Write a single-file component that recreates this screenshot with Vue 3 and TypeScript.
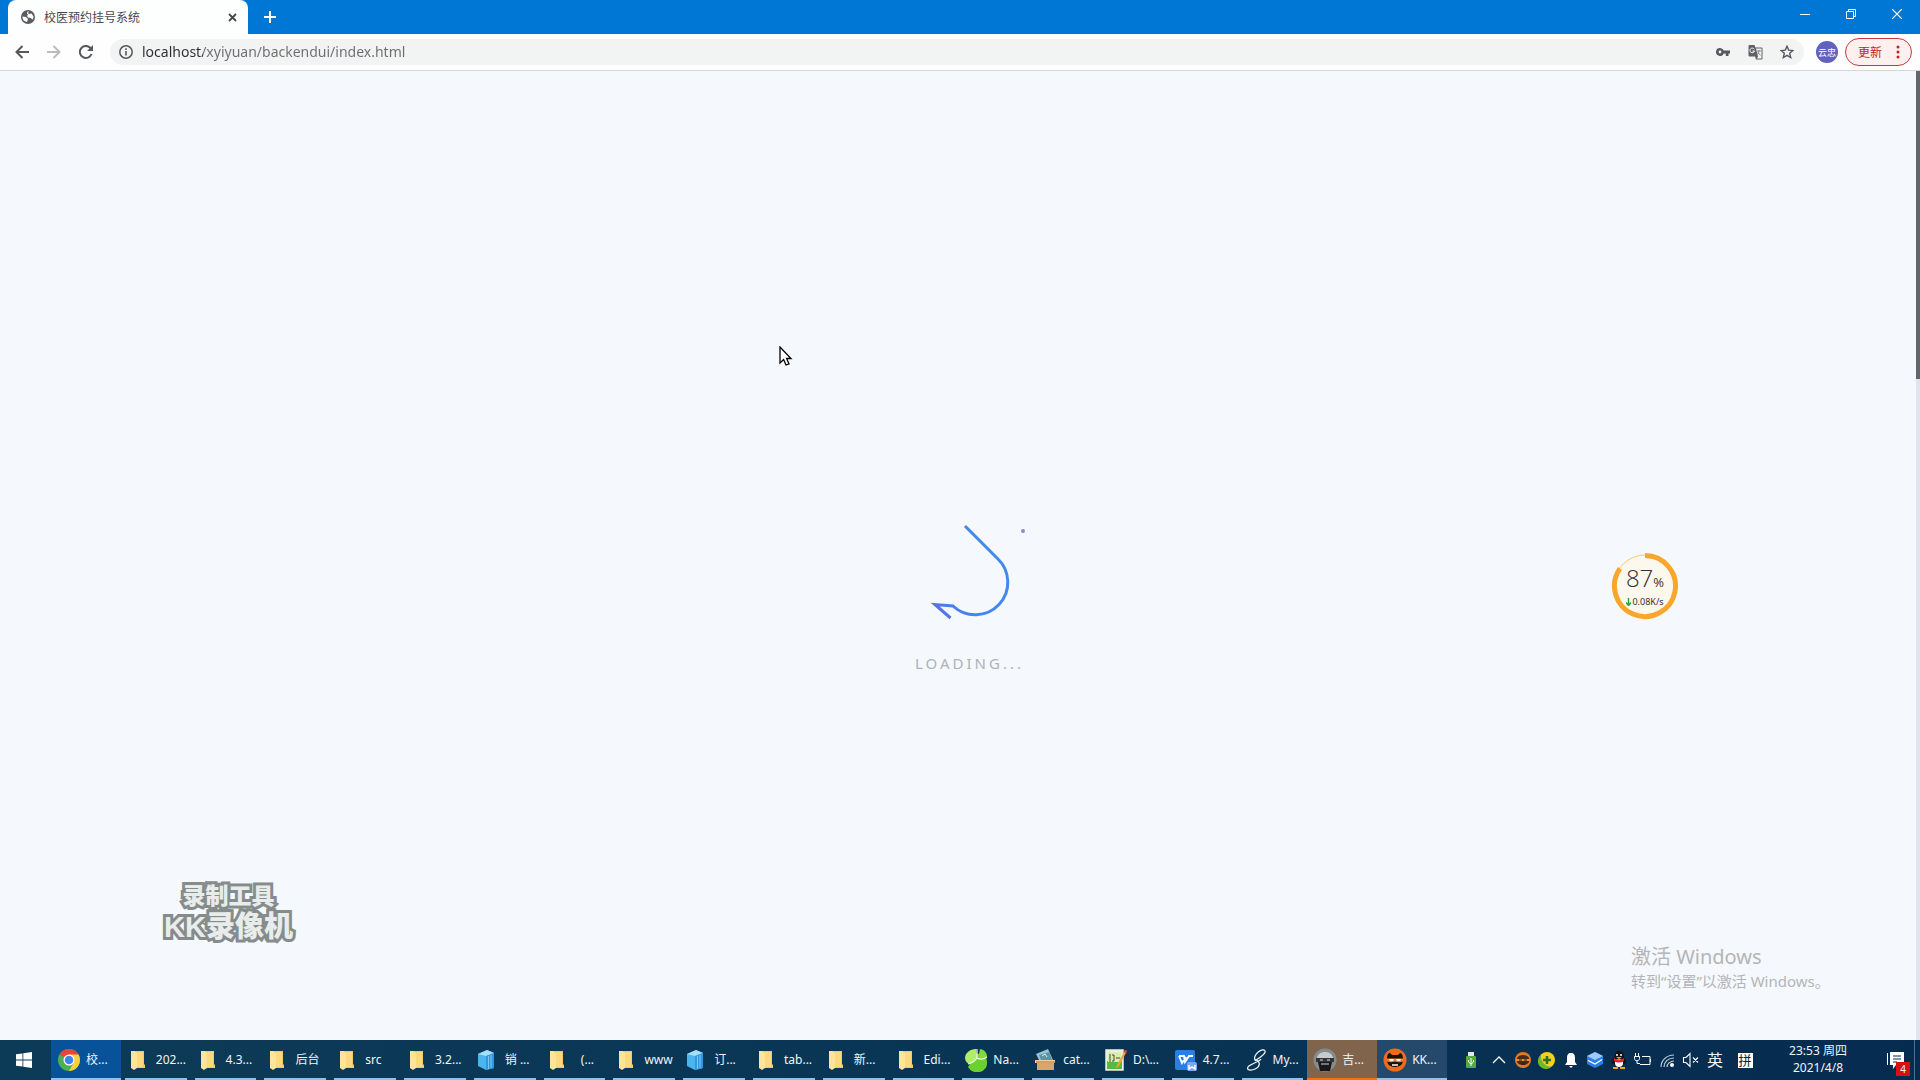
<script setup lang="ts">
import { ref } from 'vue'

interface Task {
  label: string
  icon: string
  state?: 'active' | 'alert' | 'lit'
}

const address = ref('localhost/xyiyuan/backendui/index.html')

const tasks: Task[] = [
  { label: '校...', icon: 'chrome', state: 'active' },
  { label: '202...', icon: 'folder' },
  { label: '4.3...', icon: 'folder' },
  { label: '后台', icon: 'folder' },
  { label: 'src', icon: 'folder' },
  { label: '3.2...', icon: 'folder' },
  { label: '销 ...', icon: 'cube' },
  { label: '\u00a0 (...', icon: 'folder' },
  { label: 'www', icon: 'folder' },
  { label: '订...', icon: 'cube' },
  { label: 'tab...', icon: 'folder' },
  { label: '新...', icon: 'folder' },
  { label: 'Edi...', icon: 'folder' },
  { label: 'Na...', icon: 'navicat' },
  { label: 'cat...', icon: 'archive' },
  { label: 'D:\\...', icon: 'notepad' },
  { label: '4.7...', icon: 'writer' },
  { label: 'My...', icon: 'heidi' },
  { label: '吉...', icon: 'player', state: 'alert' },
  { label: 'KK...', icon: 'kk', state: 'lit' },
]

const tray = ['chevron', 'fox', 'shield', 'bell', 'box', 'penguin', 'battery', 'wifi', 'mute']
</script>

<template>
  <div class="desktop">
    <header class="titlebar">
      <div class="tab">
        <svg class="globe" width="14" height="14" viewBox="0 0 14 14">
          <circle cx="7" cy="7" r="7" fill="#5a5d61" />
          <path d="M1.500 6.500 5 7l2 2-1 3A5.500 5.500 0 0 1 1.500 6.500ZM8 1.500 7 3l1 1 2.500-.5 2 3c0 1-.3 2-.8 3L9.500 8 7 7.500 6 6l1-1.500-1-1 .5-2Z" fill="#fff" />
        </svg>
        <span class="tab-title">校医预约挂号系统</span>
        <button class="tab-close" aria-label="关闭标签页">
          <svg width="9" height="9" viewBox="0 0 9 9"><path d="M1 1l7 7M8 1 1 8" stroke="#45494d" stroke-width="1.800" /></svg>
        </button>
      </div>
      <button class="new-tab" aria-label="新标签页">
        <svg width="12" height="12" viewBox="0 0 12 12"><path d="M6 0v12M0 6h12" stroke="#fff" stroke-width="2" /></svg>
      </button>
      <div class="window-buttons">
        <button aria-label="最小化">
          <svg width="10" height="10" viewBox="0 0 10 10"><path d="M0 5.500h10" stroke="#fff" /></svg>
        </button>
        <button aria-label="还原">
          <svg width="10" height="10" viewBox="0 0 10 10"><path d="M.5 2.500h7v7h-7zM2.500 2.500v-2h7v7h-2" stroke="#fff" fill="none" /></svg>
        </button>
        <button aria-label="关闭">
          <svg width="10" height="10" viewBox="0 0 10 10"><path d="M0 0l10 10M10 0 0 10" stroke="#fff" stroke-width="1.200" /></svg>
        </button>
      </div>
    </header>

    <nav class="toolbar">
      <button aria-label="后退">
        <svg width="14" height="14" viewBox="0 0 14 14"><path d="M7.500 1 1.500 7l6 6M1.500 7H14" stroke="#55595d" stroke-width="2" fill="none" /></svg>
      </button>
      <button aria-label="前进">
        <svg width="14" height="14" viewBox="0 0 14 14"><path d="M6.500 1l6 6-6 6M12.500 7H0" stroke="#babcbe" stroke-width="2" fill="none" /></svg>
      </button>
      <button aria-label="重新加载">
        <svg width="14" height="14" viewBox="0 0 14 14"><path d="M12.500 9A6 6 0 1 1 11.200 2.800L12.500 4.200" stroke="#55595d" stroke-width="2" fill="none" /><path d="M14 0v6H8Z" fill="#55595d" /></svg>
      </button>
      <div class="omnibox">
        <svg width="14" height="14" viewBox="0 0 14 14"><circle cx="7" cy="7" r="6.200" fill="none" stroke="#55595d" stroke-width="1.500" /><path d="M7 6v4.500M7 3.300v1.600" stroke="#55595d" stroke-width="1.600" /></svg>
        <input v-model="address" class="address" aria-label="地址" spellcheck="false" />
        <div class="omni-actions">
          <button aria-label="密码">
            <svg width="14" height="8" viewBox="0 0 14 8"><path d="M4 0a4 4 0 0 1 3.700 2.500H14v3h-1.500V8H9.800V5.500H7.700A4 4 0 1 1 4 0Zm0 2.600a1.400 1.400 0 1 0 0 2.800 1.400 1.400 0 0 0 0-2.800Z" fill="#55595d" /></svg>
          </button>
          <button aria-label="翻译">
            <svg width="15" height="15" viewBox="0 0 15 15"><path d="M1.500 0h5l1 2.500H13.500a1 1 0 0 1 1 1v10a1 1 0 0 1-1 1H8L7 11.500H1.500a1 1 0 0 1-1-1V1a1 1 0 0 1 1-1Z" fill="#5f6368" /><path d="M8 3.500h5.500v10H9L10 11.500Z" fill="#f4f4f4" /><path d="M6.300 4.300A2.300 2.300 0 1 0 6.500 6H4.500" stroke="#fff" fill="none" /><path d="M9 6h4M11 5v1c0 1.500-1 3-2 3.500M10 7.500l2.500 3" stroke="#777" fill="none" stroke-width=".8" /></svg>
          </button>
          <button aria-label="加入书签">
            <svg width="14" height="14" viewBox="0 0 14 14"><path d="m7 1.200 1.700 3.900 4.200.4-3.200 2.800 1 4.200L7 10.300l-3.700 2.200 1-4.200L1.100 5.500l4.200-.4Z" stroke="#55595d" stroke-width="1.400" fill="none" /></svg>
          </button>
        </div>
      </div>
      <button class="avatar">云忠</button>
      <button class="update">
        <span>更新</span>
        <svg width="4" height="14" viewBox="0 0 4 14" fill="#c5221f"><circle cx="2" cy="2" r="1.500" /><circle cx="2" cy="7" r="1.500" /><circle cx="2" cy="12" r="1.500" /></svg>
      </button>
    </nav>

    <main class="page">
      <div class="scrollbar"><div class="thumb"></div></div>

      <div class="loader" role="status">
        <svg width="110" height="110" viewBox="0 0 110 110" fill="none">
          <defs>
            <linearGradient id="ink" x1="0" y1="1" x2="1" y2="0">
              <stop offset="0" stop-color="#5b6fe0" />
              <stop offset=".3" stop-color="#4285f4" />
              <stop offset="1" stop-color="#418bec" />
            </linearGradient>
          </defs>
          <path d="M50 7 82.500 39.500A32 32 0 0 1 38 87L20 85.500 35.500 99" stroke="url(#ink)" stroke-width="3" />
          <circle cx="108" cy="12" r="2" fill="#8f86dc" />
        </svg>
        <span>LOADING...</span>
      </div>

      <svg class="pointer" width="14" height="21" viewBox="0 0 14 21"><path d="M1 1v16l3.600-3.500L7 19l3-1.200-2.400-5.300H12Z" fill="#fff" stroke="#000" stroke-width="1.300" /></svg>

      <div class="monitor">
        <svg class="ring" width="68" height="68" viewBox="0 0 68 68">
          <circle cx="34" cy="34" r="31" fill="#fdf8ee" stroke="#f8c77a" stroke-width="1" />
          <path d="M34 3.500A30.500 30.500 0 1 1 9 16.500" fill="none" stroke="#f8a62c" stroke-width="5" />
        </svg>
        <div class="load">87<small>%</small></div>
        <div class="rate">
          <svg width="5" height="8" viewBox="0 0 5 8"><path d="M2.500 0v7M0 4.500l2.500 3 2.500-3" stroke="#2fa33a" stroke-width="1.500" fill="none" /></svg>
          <span>0.08K/s</span>
        </div>
      </div>

      <div class="recorder">
        <div class="rec-top">录制工具</div>
        <div class="rec-bottom">KK录像机</div>
      </div>

      <div class="activation">
        <div class="act-title">激活 Windows</div>
        <div class="act-text">转到“设置”以激活 Windows。</div>
      </div>
    </main>

    <footer class="taskbar">
      <button class="start" aria-label="开始">
        <svg width="16" height="16" viewBox="0 0 16 16" fill="#fff"><path d="M0 2.300 6.500 1.400v6.200H0ZM7.300 1.300 16 0v7.600H7.300ZM0 8.400h6.500v6.200L0 13.700ZM7.300 8.400H16V16l-8.700-1.300Z" /></svg>
      </button>
      <div class="tasks">
        <button v-for="(task, i) in tasks" :key="i" class="task" :class="task.state">
          <svg class="task-icon" width="24" height="24" viewBox="0 0 24 24">
            <template v-if="task.icon === 'chrome'">
              <circle cx="12" cy="12" r="11" fill="#4caf50" />
              <path d="M12 12 2.500 6.500A11 11 0 0 1 21.500 6.500Z" fill="#e5453a" />
              <path d="M12 6.500h9.500A11 11 0 0 1 12 23L17 14Z" fill="#fdd03b" />
              <circle cx="12" cy="12" r="5.500" fill="#fff" /><circle cx="12" cy="12" r="4.300" fill="#4285e8" />
            </template>
            <template v-else-if="task.icon === 'folder'">
              <path d="M5 3h12v13l1 1v3H5Z" fill="#f3cb63" />
              <path d="M4 3h3l3 2v15l-3 2-3-2Z" fill="#ffe49a" />
              <path d="M10 4h6v15h-6Z" fill="#fbd97f" />
            </template>
            <template v-else-if="task.icon === 'cube'">
              <path d="M2 6 11 2l7 3v15l-8 2-8-4Z" fill="#4db5ee" />
              <path d="M2 6 11 2l7 3-8 3Z" fill="#a5dffa" />
              <path d="M10 8l8-3v15l-8 2Z" fill="#3397dc" />
              <path d="M12.500 8v13M15 7v13" stroke="#79ccf5" />
            </template>
            <template v-else-if="task.icon === 'navicat'">
              <path d="M12 6c6-2 11 1 11 8a10 9 0 0 1-19 5Z" fill="#6bd12f" />
              <path d="M16 1c5 1 7 4 7 8l-9 2Z" fill="#7fda3c" />
              <path d="M1 10C1 5 6 1 12 1l1 8c-1 4-4 6-8 7-2-1-4-3-4-6Z" fill="#b0ee68" />
              <path d="M13 1v9c-2 3-5 5-9 6M13 10c3 2 7 1 10-1" stroke="#f2fbe8" stroke-width="1.200" fill="none" />
            </template>
            <template v-else-if="task.icon === 'archive'">
              <path d="M2 6 14 1l5 11H5Z" fill="#9bc4cf" /><path d="M5 7 15 4l3 8H7Z" fill="#5b94a8" />
              <path d="M8 8l3-2 2 3" stroke="#def" fill="none" />
              <path d="M1 12h20v3H1Z" fill="#f1cd9b" /><path d="M3 15h17v7H3Z" fill="#dca466" /><path d="M2 14h19" stroke="#a87444" />
            </template>
            <template v-else-if="task.icon === 'notepad'">
              <path d="M2 2h17v20H2Z" fill="#e9f4d4" /><path d="M3 13h15v8H3Z" fill="#58b840" />
              <path d="M4 4h13v10H4Z" fill="#dcebae" /><path d="M2 2h17v20H2Z" fill="none" stroke="#e9eee2" stroke-width="1.500" />
              <path d="M6 6v8M8 7h2v6H8M12 10h4" stroke="#38512c" fill="none" />
              <path d="m13 17 8-15 2 1-8 15-3 2Z" fill="#eda43a" /><path d="m20 3 3 1" stroke="#ce3c2c" stroke-width="2" />
            </template>
            <template v-else-if="task.icon === 'writer'">
              <rect x="1" y="2" width="20" height="20" rx="2" fill="#2b7ee5" />
              <path d="M5 8h5l1 6 4-6h4M5 8l3 7 4-6" stroke="#fff" stroke-width="1.800" fill="none" />
              <rect x="13" y="14" width="10" height="9" rx="2" fill="#76a8f3" />
              <path d="M15 17v4l3-2 3 2v-4" stroke="#fff" stroke-width="1.500" fill="none" />
            </template>
            <template v-else-if="task.icon === 'heidi'">
              <path d="M12 13C7 9 16 1 20 2c4 2-3 7-8 10 5 2 4 7-1 9-4 2-9 1-7-2 2-3 11-5 13-8" stroke="#f1f6fa" stroke-width="1.300" fill="none" />
            </template>
            <template v-else-if="task.icon === 'player'">
              <circle cx="12" cy="12" r="11.500" fill="#858b8f" />
              <path d="M4 10C5 2 19 2 20 10Z" fill="#c8cbcc" /><path d="M3 10h18v4H3Z" fill="#303438" />
              <path d="M5 14h14l-2 9H7Z" fill="#17191b" /><path d="M7 12h3M14 12h3" stroke="#ddd" />
              <path d="M8 15h8v2H8Z" fill="#777" />
            </template>
            <template v-else>
              <circle cx="12" cy="12" r="11.500" fill="#ef6b1c" />
              <path d="M4 12C4 7 5 5 7 5l2 2h6l2-2c2 0 3 3 3 7 0 5-4 7-8 7s-8-2-8-7Z" fill="#191310" />
              <path d="M4 10.500h16v3c-3 1-5 1-8 0-3 1-5 1-8 0Z" fill="#ef8030" />
              <path d="M6 11h5l-1 2H7ZM13 11h5l-1 2h-3Z" fill="#fff" /><path d="M9 17h6" stroke="#fff" stroke-width="1.500" />
            </template>
          </svg>
          <span>{{ task.label }}</span>
        </button>
      </div>

      <div class="tray">
        <button class="usb" aria-label="安全删除硬件">
          <svg width="12" height="16" viewBox="0 0 12 16"><path d="M3 0h6v4H3Z" fill="#e3e8e2" /><rect x="1" y="4" width="10" height="12" rx="1" fill="#55ac38" /><path d="M6 6v8M3.500 8v2L6 12l2.500-2V8" stroke="#fff" fill="none" /></svg>
        </button>
        <button v-for="name in tray" :key="name" :aria-label="name">
          <svg width="18" height="18" viewBox="0 0 18 18">
            <path v-if="name === 'chevron'" d="m3 12 6-6 6 6" stroke="#fff" stroke-width="1.300" fill="none" />
            <template v-else-if="name === 'fox'">
              <circle cx="9" cy="9" r="8" fill="#e07a22" /><path d="M3 7c2-4 10-4 12 0v4c-2 4-10 4-12 0Z" fill="#4a2a15" /><path d="M2 8h14v2H2Z" fill="#e7903d" /><path d="M5 9h3M10 9h3M7 13h4" stroke="#2a1508" />
            </template>
            <template v-else-if="name === 'shield'">
              <circle cx="9" cy="9" r="8" fill="#f8cf1d" /><path d="M3 3.700A8 8 0 1 0 14 15.200C8 17 2 10 3 3.700Z" fill="#6dbb2d" /><path d="M9 5v8M5 9h8" stroke="#26722c" stroke-width="2.500" />
            </template>
            <path v-else-if="name === 'bell'" d="M9 2c3 0 4 2 4 5v4l2 3H3l2-3V7c0-3 1-5 4-5ZM7 15h4l-2 2Z" fill="#fff" />
            <template v-else-if="name === 'box'">
              <path d="m9 1 8 4v8l-8 4-8-4V5Z" fill="#2b7fe4" /><path d="m9 1 8 4-8 4-8-4Z" fill="#9cc8fa" /><path d="m2 9.500 7 3.500 7-4.500" stroke="#fff" stroke-width="1.200" fill="none" />
            </template>
            <template v-else-if="name === 'penguin'">
              <path d="M9 0C4 0 5 5 4 7c-2 2-3 5-2 6l2-1 2 4h6l2-4 2 1c1-2-1-5-2-6 0-2 0-7-5-7Z" fill="#17110f" /><ellipse cx="9" cy="12" rx="4" ry="4" fill="#fff" /><path d="M4 7c3 2 7 2 10 0v3c-3 2-7 2-10 0Z" fill="#e3232c" /><path d="M7 3v2M11 3v2" stroke="#fff" stroke-width="1.500" /><path d="M6 6h6l-3 2ZM3 16h5v2H3ZM10 16h5v2h-5Z" fill="#f5a522" />
            </template>
            <path v-else-if="name === 'battery'" d="M8 5.500h8v8H6M16.500 8v3M1.500 2v3M4.500 2v3M.5 5.500h5v2c0 3-5 3-5 0ZM3 9.500v3h3" stroke="#fff" fill="none" />
            <template v-else-if="name === 'wifi'">
              <path d="M3 16C3 9 9 4 16 4M6 16c0-5 4-9 10-9M9 16c0-3 3-6 7-6" stroke="#c3d0da" stroke-width="1.200" fill="none" /><circle cx="14" cy="14" r="2" fill="#fff" />
            </template>
            <path v-else d="M1.500 6.500H4l4-4v13l-4-4H1.500ZM11 6.500l5 5M16 6.500l-5 5" stroke="#fff" fill="none" stroke-width="1.100" />
          </svg>
        </button>
        <button class="lang">英</button>
        <button class="ime"><span>拼</span></button>
      </div>
      <button class="clock"><span>23:53 周四</span><span>2021/4/8</span></button>
      <button class="notices" aria-label="通知">
        <svg width="18" height="17" viewBox="0 0 18 17"><path d="M3 0h14v13H9l-3 4v-4H3Z" fill="#fff" /><path d="M.5 1v12" stroke="#fff" /><path d="M6 4h8M6 7h8M6 10h4" stroke="#072c50" /></svg>
        <span class="badge">4</span>
      </button>
    </footer>
  </div>
</template>

<style>
body {
  overflow: hidden;
}
</style>

<style scoped>
.desktop {
  display: flex;
  flex-direction: column;
  height: 100vh;
  overflow: hidden;
  font-family: 'Noto Sans', 'Noto Sans CJK SC', sans-serif;
}

button {
  display: flex;
  align-items: center;
  justify-content: center;
  padding: 0;
  border: 0;
  background: none;
  color: inherit;
  font: inherit;
}

svg {
  flex: none;
}

.titlebar {
  display: flex;
  flex: none;
  height: 34px;
  padding-left: 8px;
  background: #0077d4;
}

.tab {
  display: flex;
  align-items: center;
  box-sizing: border-box;
  width: 240px;
  padding: 0 8px 0 13px;
  border-radius: 8px 8px 0 0;
  background: #fdfffe;
}

.tab-title {
  flex: 1;
  margin-left: 9px;
  color: #45494d;
  font-size: 12px;
}

.tab-close {
  width: 16px;
  height: 16px;
}

.new-tab {
  width: 44px;
}

.window-buttons {
  display: flex;
  height: 28px;
  margin-left: auto;
}

.window-buttons button {
  width: 46px;
}

.toolbar {
  display: flex;
  flex: none;
  align-items: center;
  box-sizing: border-box;
  height: 37px;
  padding: 0 8px 0 6px;
  border-bottom: 1px solid #d5d7da;
  background: #fefefe;
}

.toolbar > button {
  width: 32px;
  height: 32px;
}

.omnibox {
  display: flex;
  flex: 1;
  align-items: center;
  height: 26px;
  margin: 0 12px 0 8px;
  padding: 0 1px 0 9px;
  border-radius: 13px;
  background: #f2f3f3;
}

.address {
  flex: 1;
  margin-left: 9px;
  padding: 0 0 2px;
  border: 0;
  outline: 0;
  background: linear-gradient(to right, #2b2d30 61px, #6a6e72 61px);
  background-clip: text;
  color: transparent;
  font: inherit;
  font-size: 14px;
}

.omni-actions {
  display: flex;
}

.omni-actions button {
  width: 32px;
}

.toolbar > .avatar {
  width: 22px;
  height: 22px;
  border-radius: 50%;
  background: #6261bd;
  color: #fff;
  font-size: 9px;
}

.toolbar > .update {
  justify-content: space-between;
  box-sizing: border-box;
  width: 67px;
  height: 28px;
  margin-left: 7px;
  padding: 0 11px 0 12px;
  border: 1px solid #c9383a;
  border-radius: 14px;
  background: #fdf0ef;
  color: #c5221f;
  font-size: 12px;
}

.page {
  position: relative;
  flex: 1;
  min-height: 0;
  background: #f5f8fc;
}

.scrollbar {
  position: absolute;
  top: 0;
  right: 0;
  width: 4px;
  height: 100%;
  background: #dfe4ed;
}

.thumb {
  height: 308px;
  background: #63666a;
}

.loader {
  position: absolute;
  top: 448px;
  left: calc(50% - 45px);
  display: flex;
  flex-direction: column;
  color: #b0b3b7;
  font-size: 15px;
  letter-spacing: 3px;
  line-height: 20px;
}

.loader span {
  margin-top: 24px;
}

.pointer {
  position: absolute;
  top: 275px;
  left: 779px;
}

.monitor {
  position: absolute;
  top: 481px;
  right: 241px;
  width: 68px;
  height: 68px;
  color: #33312e;
  text-align: center;
}

.ring {
  position: absolute;
  top: 0;
  left: 0;
}

.load,
.rate {
  position: relative;
}

.load {
  padding-top: 12px;
  font-family: 'Open Sans', 'Noto Sans', sans-serif;
  font-size: 24px;
  font-weight: 300;
  line-height: 28px;
}

.load small {
  font-size: 13px;
  font-weight: 400;
}

.rate {
  display: flex;
  align-items: center;
  justify-content: center;
  gap: 1px;
  font-size: 9px;
  line-height: 12px;
}

.recorder {
  position: absolute;
  bottom: 96px;
  left: 164px;
  color: #e8eceb;
  font-family: 'Liberation Sans', 'Noto Sans CJK SC', sans-serif;
  font-weight: 900;
  text-align: center;
  paint-order: stroke fill;
  -webkit-text-stroke: 6px #868c8b;
}

.rec-top {
  font-size: 23px;
  line-height: 28px;
}

.rec-bottom {
  font-size: 29px;
  line-height: 34px;
}

.activation {
  position: absolute;
  right: 96px;
  bottom: 49px;
  width: 193px;
  color: #b3b5b8;
  white-space: nowrap;
}

.act-title {
  font-size: 20px;
  line-height: 28px;
}

.act-text {
  font-size: 15px;
  line-height: 20px;
}

.taskbar {
  display: flex;
  flex: none;
  height: 40px;
  background: linear-gradient(to right, #0c3b57, #093454 60%, #062b50);
  color: #f1f5f8;
  font-size: 12px;
}

.start {
  width: 48px;
  margin-right: 3px;
}

.tasks {
  display: flex;
  flex: 1;
}

.task {
  position: relative;
  flex: 1 1 0;
  justify-content: flex-start;
  min-width: 0;
  padding-left: 6px;
  white-space: nowrap;
}

.task span {
  margin-left: 5px;
  padding-bottom: 2px;
}

.task::after {
  content: '';
  position: absolute;
  right: 4px;
  bottom: 0;
  left: 4px;
  height: 2px;
  background: #8cc3ea;
}

.task.active {
  background: #08529a;
}

.task.alert {
  background: #80644b;
}

.task.lit {
  background: #25496a;
}

.task.active::after,
.task.alert::after,
.task.lit::after {
  right: 0;
  left: 0;
}

.task.alert::after {
  background: #f7700a;
}

.tray {
  display: flex;
  margin-left: 8px;
}

.tray button {
  width: 24px;
}

.tray .usb {
  width: 32px;
}

.tray .lang {
  padding-bottom: 2px;
  font-size: 16px;
}

.tray .ime {
  width: 36px;
}

.ime span {
  width: 15px;
  height: 15px;
  background: #fff;
  color: #0a2038;
  font-size: 13px;
  line-height: 15px;
}

.clock {
  flex-direction: column;
  width: 110px;
  padding-bottom: 2px;
  line-height: 17px;
}

.notices {
  position: relative;
  width: 42px;
  margin-right: 5px;
  padding-left: 4px;
  border-right: 1px solid #50708b;
}

.badge {
  position: absolute;
  right: 4px;
  bottom: 4px;
  width: 14px;
  height: 14px;
  background: #d90f12;
  font-size: 10px;
  line-height: 14px;
}
</style>
